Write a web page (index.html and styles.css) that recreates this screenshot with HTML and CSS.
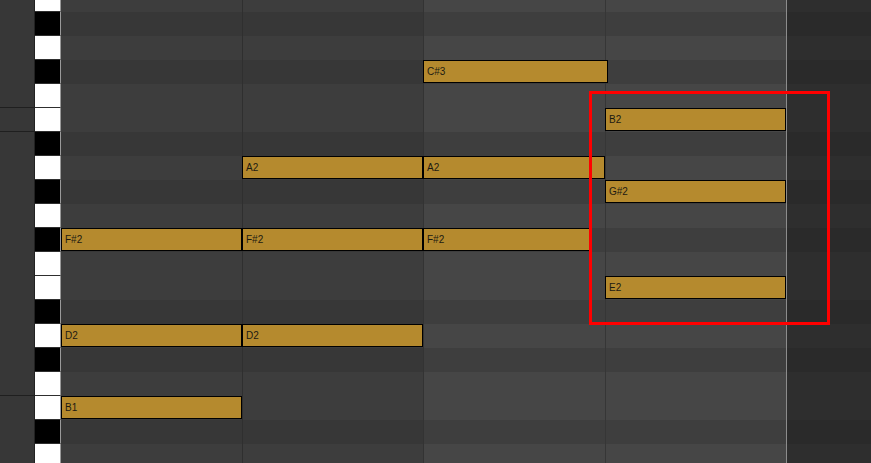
FILE: index.html
```html
<!DOCTYPE html>
<html>
<head>
<meta charset="utf-8">
<link rel="stylesheet" href="styles.css">
</head>
<body>
<div class="roll">
  <div class="rows">
    <div class="row w"><div class="side"></div><div class="key"></div><div class="c c1"></div><div class="c c2"></div><div class="c c3"></div><div class="c c4"></div><div class="c out"></div></div>
    <div class="row b"><div class="side"></div><div class="key"></div><div class="c c1"></div><div class="c c2"></div><div class="c c3"></div><div class="c c4"></div><div class="c out"></div></div>
    <div class="row w"><div class="side"></div><div class="key"></div><div class="c c1"></div><div class="c c2"></div><div class="c c3"></div><div class="c c4"></div><div class="c out"></div></div>
    <div class="row b"><div class="side"></div><div class="key"></div><div class="c c1"></div><div class="c c2"></div><div class="c c3"></div><div class="c c4"></div><div class="c out"></div></div>
    <div class="row w"><div class="side sl"></div><div class="key"></div><div class="c c1"></div><div class="c c2"></div><div class="c c3"></div><div class="c c4"></div><div class="c out"></div></div>
    <div class="row w"><div class="side sl"></div><div class="key"></div><div class="c c1"></div><div class="c c2"></div><div class="c c3"></div><div class="c c4"></div><div class="c out"></div></div>
    <div class="row b"><div class="side"></div><div class="key"></div><div class="c c1"></div><div class="c c2"></div><div class="c c3"></div><div class="c c4"></div><div class="c out"></div></div>
    <div class="row w"><div class="side"></div><div class="key"></div><div class="c c1"></div><div class="c c2"></div><div class="c c3"></div><div class="c c4"></div><div class="c out"></div></div>
    <div class="row b"><div class="side"></div><div class="key"></div><div class="c c1"></div><div class="c c2"></div><div class="c c3"></div><div class="c c4"></div><div class="c out"></div></div>
    <div class="row w"><div class="side"></div><div class="key"></div><div class="c c1"></div><div class="c c2"></div><div class="c c3"></div><div class="c c4"></div><div class="c out"></div></div>
    <div class="row b"><div class="side"></div><div class="key"></div><div class="c c1"></div><div class="c c2"></div><div class="c c3"></div><div class="c c4"></div><div class="c out"></div></div>
    <div class="row w"><div class="side"></div><div class="key"></div><div class="c c1"></div><div class="c c2"></div><div class="c c3"></div><div class="c c4"></div><div class="c out"></div></div>
    <div class="row w"><div class="side"></div><div class="key"></div><div class="c c1"></div><div class="c c2"></div><div class="c c3"></div><div class="c c4"></div><div class="c out"></div></div>
    <div class="row b"><div class="side"></div><div class="key"></div><div class="c c1"></div><div class="c c2"></div><div class="c c3"></div><div class="c c4"></div><div class="c out"></div></div>
    <div class="row w"><div class="side"></div><div class="key"></div><div class="c c1"></div><div class="c c2"></div><div class="c c3"></div><div class="c c4"></div><div class="c out"></div></div>
    <div class="row b"><div class="side"></div><div class="key"></div><div class="c c1"></div><div class="c c2"></div><div class="c c3"></div><div class="c c4"></div><div class="c out"></div></div>
    <div class="row w"><div class="side sl"></div><div class="key"></div><div class="c c1"></div><div class="c c2"></div><div class="c c3"></div><div class="c c4"></div><div class="c out"></div></div>
    <div class="row w"><div class="side"></div><div class="key"></div><div class="c c1"></div><div class="c c2"></div><div class="c c3"></div><div class="c c4"></div><div class="c out"></div></div>
    <div class="row b"><div class="side"></div><div class="key"></div><div class="c c1"></div><div class="c c2"></div><div class="c c3"></div><div class="c c4"></div><div class="c out"></div></div>
    <div class="row w"><div class="side"></div><div class="key"></div><div class="c c1"></div><div class="c c2"></div><div class="c c3"></div><div class="c c4"></div><div class="c out"></div></div>
  </div>

  <div class="note" style="left:423px;top:60px;width:185px">C#3</div>
  <div class="note" style="left:605px;top:108px;width:181px">B2</div>
  <div class="note" style="left:242px;top:156px;width:181px">A2</div>
  <div class="note" style="left:423px;top:156px;width:182px">A2</div>
  <div class="note" style="left:605px;top:180px;width:181px">G#2</div>
  <div class="note" style="left:61px;top:228px;width:181px">F#2</div>
  <div class="note" style="left:242px;top:228px;width:181px">F#2</div>
  <div class="note" style="left:423px;top:228px;width:168px">F#2</div>
  <div class="note" style="left:605px;top:276px;width:181px">E2</div>
  <div class="note" style="left:61px;top:324px;width:181px">D2</div>
  <div class="note" style="left:242px;top:324px;width:181px">D2</div>
  <div class="note" style="left:61px;top:396px;width:181px">B1</div>

  <div class="highlight"></div>
</div>
</body>
</html>
```

FILE: styles.css
```css
html, body {
  margin: 0;
  padding: 0;
  background: #2c2c2c;
  overflow: hidden;
}

.roll {
  position: relative;
  width: 871px;
  height: 463px;
  overflow: hidden;
}

.rows {
  display: flex;
  flex-direction: column;
  margin-top: -12px;
}

.row {
  display: flex;
  height: 24px;
}

.side {
  flex: none;
  width: 34px;
  background: #373737;
  border-right: 1px solid #222222;
  box-sizing: content-box;
}

.side.sl {
  box-sizing: border-box;
  width: 35px;
  border-bottom: 1px solid #1f1f1f;
}

.key {
  flex: none;
  width: 25px;
  border-right: 1px solid #9a9a9a;
  border-bottom: 1px solid #2e2e2e;
  box-sizing: content-box;
  height: 23px;
}

.row.w .key { background: #ffffff; }
.row.b .key { background: #000000; }

.c { flex: none; }

.c1 { width: 181px; }
.c2 { width: 180px; border-left: 1px solid #2f2f2f; }
.c3 { width: 181px; border-left: 1px solid #333333; }
.c4 { width: 180px; border-left: 1px solid #363636; }
.out { flex: 1; border-left: 1px solid #8c8c8c; }

.row.w .c1, .row.w .c2 { background: #3d3d3d; }
.row.b .c1, .row.b .c2 { background: #373737; }
.row.w .c3, .row.w .c4 { background: #464646; }
.row.b .c3, .row.b .c4 { background: #3e3e3e; }
.row.w .out { background: #2e2e2e; }
.row.b .out { background: #2a2a2a; }

.note {
  position: absolute;
  height: 23px;
  box-sizing: border-box;
  border: 1px solid #000000;
  background: #b58a2e;
  color: #1c1a12;
  font-family: "Liberation Sans", Arial, sans-serif;
  font-size: 10px;
  line-height: 21px;
  padding-left: 3px;
  white-space: nowrap;
  overflow: hidden;
}

.highlight {
  position: absolute;
  left: 589px;
  top: 91px;
  width: 241px;
  height: 234px;
  box-sizing: border-box;
  border: 3px solid #ff0000;
}
```
